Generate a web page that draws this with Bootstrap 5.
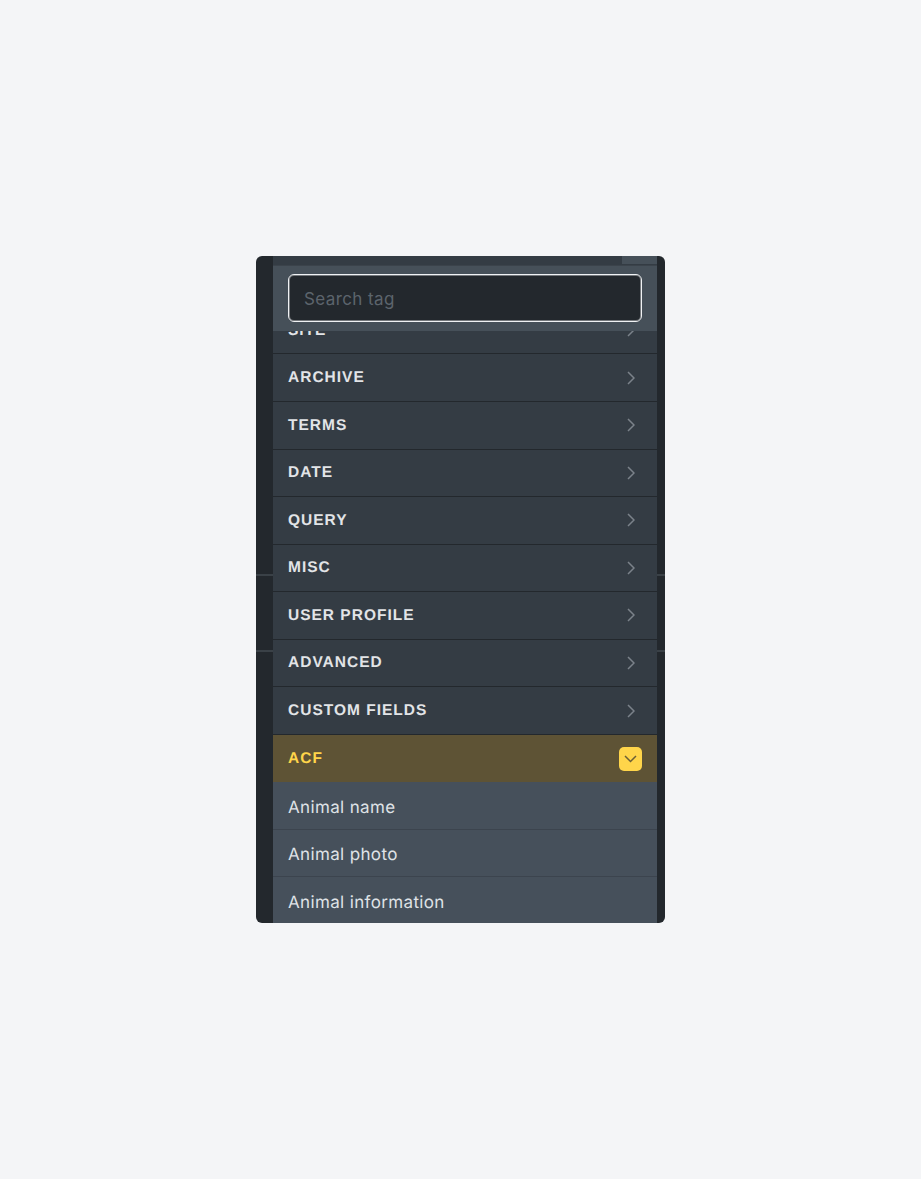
<!doctype html>
<html lang="en">
<head>
<meta charset="utf-8">
<title>Tag picker</title>
<link rel="stylesheet" href="https://cdn.jsdelivr.net/npm/bootstrap@5.3.0/dist/css/bootstrap.min.css">
<style>
html,body{height:100%}
body{background:#f4f5f7;font-family:"Inter",sans-serif;padding-top:256px;text-rendering:geometricPrecision}
.tag-panel{width:409px;height:667px;margin-left:256px;background:#23282d;border-radius:6px;overflow:hidden}
.gutter{flex:0 0 auto;padding-top:244px}
.gutter-left{width:17px}
.gutter-right{width:8px}
.gutter-cell{height:76px;border-bottom:2px solid #3a4147}
.tag-main{width:384px;background:#343c44}
.top-strip{height:8px;background:#343c44}
.top-strip-end{width:35px;background:#465059}
.top-gap{height:42.9px;background:#343c44}
.search-cover{top:9px;left:0;right:0;height:66px;background:#465059;padding:8px 15px;border-top:1px solid #3b434b}
.search-input.form-control{height:48px;background:#23282d;border:1px solid #f0f2f4;border-radius:6px;color:#fff;font-size:17px;letter-spacing:.4px;padding:2px 15px 0;box-shadow:inset 0 0 0 1px rgba(238,240,242,.4)}
.search-input.form-control::placeholder{color:#5c646c;opacity:1}
.tag-row{height:47.55px;padding:0 22px 0 15px;background:#343c44;border-bottom:1px solid #23282d;color:#e2e4e7;font-family:"Liberation Sans",sans-serif;font-weight:700;font-size:15.500px;letter-spacing:1px}
.tag-row-open{background:#5e5335;color:#ffd54a;border-bottom:0;padding-right:15px}
.caret-right{color:#7b828a}
.caret-box{width:23px;height:24px;background:#ffd54a;border-radius:5px;color:#6b5f36}
.tag-item{height:47.5px;padding:6px 15px 0;background:#46505b;border-bottom:1px solid #3c444e;color:#dfe2e6;font-size:17px;letter-spacing:.35px}
</style>
</head>
<body>
<div class="tag-panel d-flex">
  <div class="gutter gutter-left"><div class="gutter-cell"></div><div class="gutter-cell"></div></div>
  <div class="tag-main position-relative overflow-hidden">
    <div class="top-strip d-flex justify-content-end"><div class="top-strip-end"></div></div>
    <div class="top-gap"></div>
    <div class="position-absolute search-cover">
      <input class="form-control search-input" type="text" placeholder="Search tag">
    </div>
    <div class="tag-row d-flex align-items-center justify-content-between"><span>SITE</span><svg class="caret-right" width="8" height="14" viewBox="0 0 8 14" fill="none" stroke="currentColor" stroke-width="1.5"><path d="M1 1l6 6-6 6"/></svg></div>
    <div class="tag-row d-flex align-items-center justify-content-between"><span>ARCHIVE</span><svg class="caret-right" width="8" height="14" viewBox="0 0 8 14" fill="none" stroke="currentColor" stroke-width="1.5"><path d="M1 1l6 6-6 6"/></svg></div>
    <div class="tag-row d-flex align-items-center justify-content-between"><span>TERMS</span><svg class="caret-right" width="8" height="14" viewBox="0 0 8 14" fill="none" stroke="currentColor" stroke-width="1.5"><path d="M1 1l6 6-6 6"/></svg></div>
    <div class="tag-row d-flex align-items-center justify-content-between"><span>DATE</span><svg class="caret-right" width="8" height="14" viewBox="0 0 8 14" fill="none" stroke="currentColor" stroke-width="1.5"><path d="M1 1l6 6-6 6"/></svg></div>
    <div class="tag-row d-flex align-items-center justify-content-between"><span>QUERY</span><svg class="caret-right" width="8" height="14" viewBox="0 0 8 14" fill="none" stroke="currentColor" stroke-width="1.5"><path d="M1 1l6 6-6 6"/></svg></div>
    <div class="tag-row d-flex align-items-center justify-content-between"><span>MISC</span><svg class="caret-right" width="8" height="14" viewBox="0 0 8 14" fill="none" stroke="currentColor" stroke-width="1.5"><path d="M1 1l6 6-6 6"/></svg></div>
    <div class="tag-row d-flex align-items-center justify-content-between"><span>USER PROFILE</span><svg class="caret-right" width="8" height="14" viewBox="0 0 8 14" fill="none" stroke="currentColor" stroke-width="1.5"><path d="M1 1l6 6-6 6"/></svg></div>
    <div class="tag-row d-flex align-items-center justify-content-between"><span>ADVANCED</span><svg class="caret-right" width="8" height="14" viewBox="0 0 8 14" fill="none" stroke="currentColor" stroke-width="1.5"><path d="M1 1l6 6-6 6"/></svg></div>
    <div class="tag-row d-flex align-items-center justify-content-between"><span>CUSTOM FIELDS</span><svg class="caret-right" width="8" height="14" viewBox="0 0 8 14" fill="none" stroke="currentColor" stroke-width="1.5"><path d="M1 1l6 6-6 6"/></svg></div>
    <div class="tag-row tag-row-open d-flex align-items-center justify-content-between"><span>ACF</span><span class="caret-box d-flex align-items-center justify-content-center"><svg width="13" height="8" viewBox="0 0 13 8" fill="none" stroke="currentColor" stroke-width="1.5"><path d="M1 1l5.500 5.500L12 1"/></svg></span></div>
    <div class="tag-item d-flex align-items-center">Animal name</div>
    <div class="tag-item d-flex align-items-center">Animal photo</div>
    <div class="tag-item d-flex align-items-center">Animal information</div>
  </div>
  <div class="gutter gutter-right"><div class="gutter-cell"></div><div class="gutter-cell"></div></div>
</div>
<script src="https://cdn.jsdelivr.net/npm/bootstrap@5.3.0/dist/js/bootstrap.bundle.min.js"></script>
</body>
</html>
